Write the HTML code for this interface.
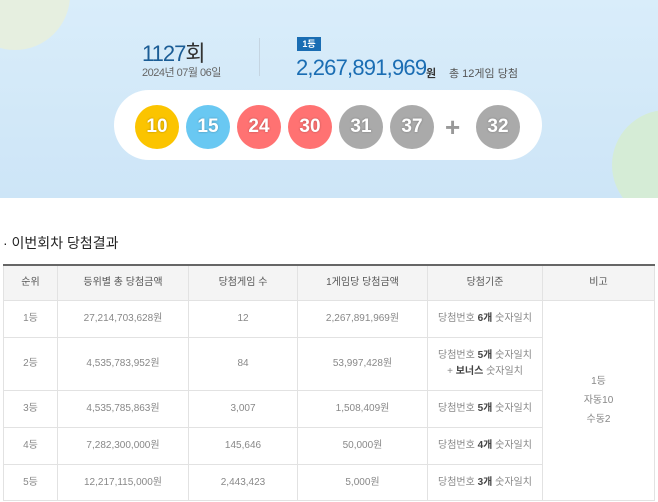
<!DOCTYPE html>
<html><head><meta charset="utf-8"><style>
*{margin:0;padding:0;box-sizing:border-box}
body{width:658px;height:502px;overflow:hidden;background:#fff;font-family:"Liberation Sans","Noto Sans CJK KR",sans-serif;position:relative}
.top{position:absolute;left:0;top:0;width:658px;height:198px;background:linear-gradient(#d9edfa,#cde5f7);overflow:hidden}
.c1{position:absolute;left:-40px;top:-60px;width:110px;height:110px;border-radius:50%;background:#e6efe0}
.c2{position:absolute;left:612px;top:110px;width:110px;height:110px;border-radius:50%;background:#d5ecd6}
.t{position:absolute;white-space:nowrap}
.pill{position:absolute;left:114px;top:90px;width:428px;height:70px;border-radius:35px;background:#fff}
.b{position:absolute;top:105px;width:44px;height:44px;border-radius:50%;color:#fff;font-weight:bold;font-size:19px;line-height:44px;text-align:center;text-shadow:0 0 2px rgba(0,0,0,.3)}
.c{position:absolute;display:flex;align-items:center;justify-content:center;text-align:center;border-right:1px solid #e2e2e2;border-bottom:1px solid #e2e2e2;font-size:10px;color:#888;line-height:16px}
.h{background:#f4f4f4;color:#555}
b{color:#444}
</style></head><body>
<div class="top"><div class="c1"></div><div class="c2"></div>
<div class="t" style="left:142px;top:36px;font-size:22px;color:#1a5c95;letter-spacing:-1px">1127<span style="color:#333">회</span></div>
<div class="t" style="left:142px;top:64px;font-size:11px;color:#666;letter-spacing:-0.5px">2024년 07월 06일</div>
<div style="position:absolute;left:259px;top:38px;width:1px;height:38px;background:#c5d5e2"></div>
<div class="t" style="left:297px;top:37px;width:24px;height:14px;background:#1a6db3;color:#fff;font-size:9px;font-weight:bold;text-align:center;line-height:14px">1등</div>
<div class="t" style="left:296px;top:55px;font-size:22px;color:#1a6db3;letter-spacing:-0.8px">2,267,891,969</div>
<div class="t" style="left:426px;top:65px;font-size:11px;color:#333;font-weight:bold">원</div>
<div class="t" style="left:449px;top:65px;font-size:11px;color:#555">총 12게임 당첨</div>
<div class="pill"></div>
<div class="b" style="left:135px;background:#fbc400">10</div>
<div class="b" style="left:186px;background:#69c8f2">15</div>
<div class="b" style="left:237px;background:#ff7272">24</div>
<div class="b" style="left:288px;background:#ff7272">30</div>
<div class="b" style="left:339px;background:#aaa">31</div>
<div class="b" style="left:390px;background:#aaa">37</div>
<div class="t" style="left:445px;top:112px;font-size:26px;color:#999;font-weight:bold">+</div>
<div class="b" style="left:476px;background:#aaa">32</div>
</div>
<div class="t" style="left:3px;top:233px;font-size:14px;color:#222">· 이번회차 당첨결과</div>
<div style="position:absolute;left:3px;top:264px;width:652px;height:2px;background:#666"></div>
<div style="position:absolute;left:3px;top:266px;width:1px;height:235px;background:#e2e2e2"></div>
<div id="g"></div>
<!-- header -->
<div class="c h" style="left:4px;top:266px;width:54px;height:35px">순위</div>
<div class="c h" style="left:58px;top:266px;width:131px;height:35px">등위별 총 당첨금액</div>
<div class="c h" style="left:189px;top:266px;width:109px;height:35px">당첨게임 수</div>
<div class="c h" style="left:298px;top:266px;width:130px;height:35px">1게임당 당첨금액</div>
<div class="c h" style="left:428px;top:266px;width:115px;height:35px">당첨기준</div>
<div class="c h" style="left:543px;top:266px;width:112px;height:35px">비고</div>
<!-- rows -->
<div class="c" style="left:4px;top:301px;width:54px;height:37px">1등</div>
<div class="c" style="left:58px;top:301px;width:131px;height:37px">27,214,703,628원</div>
<div class="c" style="left:189px;top:301px;width:109px;height:37px">12</div>
<div class="c" style="left:298px;top:301px;width:130px;height:37px">2,267,891,969원</div>
<div class="c" style="left:428px;top:301px;width:115px;height:37px"><span>당첨번호 <b>6개</b> 숫자일치</span></div>
<div class="c" style="left:4px;top:338px;width:54px;height:53px">2등</div>
<div class="c" style="left:58px;top:338px;width:131px;height:53px">4,535,783,952원</div>
<div class="c" style="left:189px;top:338px;width:109px;height:53px">84</div>
<div class="c" style="left:298px;top:338px;width:130px;height:53px">53,997,428원</div>
<div class="c" style="left:428px;top:338px;width:115px;height:53px"><span>당첨번호 <b>5개</b> 숫자일치<br>+ <b>보너스</b> 숫자일치</span></div>
<div class="c" style="left:4px;top:391px;width:54px;height:37px">3등</div>
<div class="c" style="left:58px;top:391px;width:131px;height:37px">4,535,785,863원</div>
<div class="c" style="left:189px;top:391px;width:109px;height:37px">3,007</div>
<div class="c" style="left:298px;top:391px;width:130px;height:37px">1,508,409원</div>
<div class="c" style="left:428px;top:391px;width:115px;height:37px"><span>당첨번호 <b>5개</b> 숫자일치</span></div>
<div class="c" style="left:4px;top:428px;width:54px;height:37px">4등</div>
<div class="c" style="left:58px;top:428px;width:131px;height:37px">7,282,300,000원</div>
<div class="c" style="left:189px;top:428px;width:109px;height:37px">145,646</div>
<div class="c" style="left:298px;top:428px;width:130px;height:37px">50,000원</div>
<div class="c" style="left:428px;top:428px;width:115px;height:37px"><span>당첨번호 <b>4개</b> 숫자일치</span></div>
<div class="c" style="left:4px;top:465px;width:54px;height:36px">5등</div>
<div class="c" style="left:58px;top:465px;width:131px;height:36px">12,217,115,000원</div>
<div class="c" style="left:189px;top:465px;width:109px;height:36px">2,443,423</div>
<div class="c" style="left:298px;top:465px;width:130px;height:36px">5,000원</div>
<div class="c" style="left:428px;top:465px;width:115px;height:36px"><span>당첨번호 <b>3개</b> 숫자일치</span></div>
<div class="c" style="left:543px;top:301px;width:112px;height:200px;line-height:19px"><span>1등<br>자동10<br>수동2</span></div>
</body></html>
